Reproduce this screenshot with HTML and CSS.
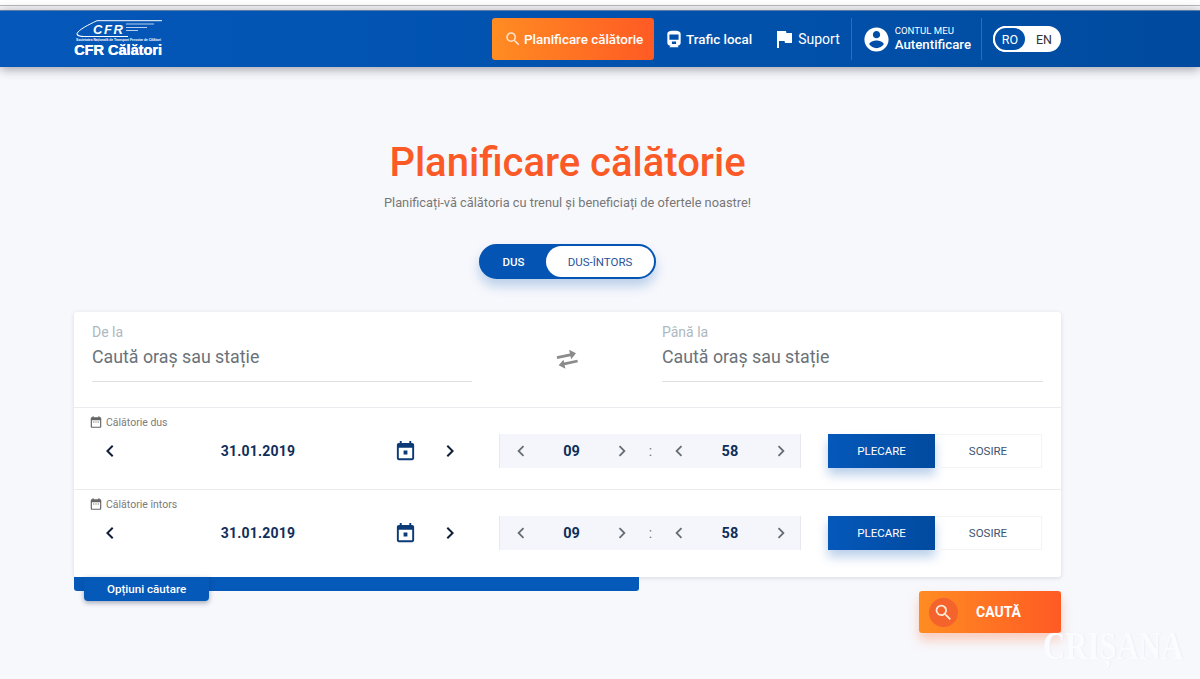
FILE: index.html
```html
<!DOCTYPE html>
<html lang="ro">
<head>
  <meta charset="UTF-8" />
  <meta name="viewport" content="width=device-width, initial-scale=1.0"/>
  <title>CFR Călători - Planificare călătorie</title>
  <link rel="stylesheet" href="styles.css">
</head>
<body>
  <svg class="sprite" aria-hidden="true">
    <symbol id="i-search" viewBox="0 0 24 24"><path d="M15.5 14h-.79l-.28-.27A6.47 6.47 0 0 0 16 9.5 6.5 6.5 0 1 0 9.5 16c1.61 0 3.09-.59 4.23-1.57l.27.28v.79l5 4.99L20.49 19l-4.99-5zm-6 0C7.01 14 5 11.99 5 9.5S7.01 5 9.5 5 14 7.01 14 9.5 11.99 14 9.5 14z"/></symbol>
    <symbol id="i-train" viewBox="0 0 24 24"><path fill-rule="evenodd" d="M12 2C8 2 4 2.5 4 6v10.500C4 18.430 5.570 20 7.500 20h.5l-1.500 1.500V22h11v-.5L16 20h.5c1.930 0 3.500-1.570 3.500-3.500V6c0-3.500-4-4-8-4zM6.500 6.500h11v6.500h-11zM9.500 15h5v3h-5z"/></symbol>
    <symbol id="i-flag" viewBox="0 0 24 24"><path d="M14.400 6L14 4H5v17h2v-7h5.600l.4 2h7V6z"/></symbol>
    <symbol id="i-user" viewBox="0 0 24 24"><path d="M12 2C6.480 2 2 6.480 2 12s4.480 10 10 10 10-4.480 10-10S17.520 2 12 2zm0 3c1.660 0 3 1.340 3 3s-1.340 3-3 3-3-1.340-3-3 1.340-3 3-3zm0 14.200c-2.500 0-4.710-1.280-6-3.220.03-1.990 4-3.080 6-3.080 1.990 0 5.970 1.090 6 3.080-1.290 1.940-3.500 3.220-6 3.220z"/></symbol>
    <symbol id="i-prev" viewBox="0 0 24 24"><path d="M15.410 7.410L14 6l-6 6 6 6 1.410-1.410L10.830 12z"/></symbol>
    <symbol id="i-next" viewBox="0 0 24 24"><path d="M8.590 16.590L10 18l6-6-6-6-1.410 1.410L13.170 12z"/></symbol>
    <symbol id="i-day" viewBox="0 0 24 24"><path d="M19 3h-1V1h-2v2H8V1H6v2H5c-1.110 0-2 .9-2 2v14c0 1.100.890 2 2 2h14c1.100 0 2-.9 2-2V5c0-1.100-.9-2-2-2zm0 16H5V8h14v11zM10 11h4v4h-4z"/></symbol>
    <symbol id="i-range" viewBox="0 0 24 24"><path d="M9 11H7v2h2v-2zm4 0h-2v2h2v-2zm4 0h-2v2h2v-2zm2-7h-1V2h-2v2H8V2H6v2H5c-1.110 0-2 .9-2 2v14c0 1.100.890 2 2 2h14c1.100 0 2-.9 2-2V6c0-1.100-.9-2-2-2zm0 16H5V9h14v11z"/></symbol>
    <symbol id="i-swap" viewBox="0 0 24 24"><path d="M3 8.500h12.500V5l5.500 4.500-5.500 4.500v-3H3zM21 15.500H8.500V13L3 17l5.500 4.500V18H21z"/></symbol>
  </svg>

  <div class="browser-strip"></div>

  <header class="topbar">
    <div class="wrap topbar-inner">
      <a class="logo" href="#">
        <svg class="logo-train" viewBox="0 0 86 17" aria-hidden="true">
          <path d="M1 13.500C3 9.500 12 5 21 .7H86" fill="none" stroke="#fff" stroke-width="1"/>
          <path d="M1 13.500C1 16 4 16.500 8 16.500H52" fill="none" stroke="#fff" stroke-width="1.200"/>
          <path d="M50 4H78M50 7.500H71M50 10.500H62" fill="none" stroke="#b9cdea" stroke-width="1.100"/>
        </svg>
        <span class="logo-cfr">CFR</span>
        <span class="logo-small">Societatea Națională de Transport Feroviar de Călători</span>
        <span class="logo-name">CFR Călători</span>
      </a>
      <nav class="nav">
        <a class="nav-item nav-item-active" href="#"><svg class="icon icon-nav-search"><use href="#i-search"/></svg>Planificare călătorie</a>
        <a class="nav-item nav-item-trafic" href="#"><svg class="icon icon-train"><use href="#i-train"/></svg>Trafic local</a>
        <a class="nav-item nav-item-suport" href="#"><svg class="icon icon-flag"><use href="#i-flag"/></svg>Suport</a>
        <a class="account" href="#">
          <svg class="icon icon-user"><use href="#i-user"/></svg>
          <span class="account-text">
            <small>CONTUL MEU</small>
            <b>Autentificare</b>
          </span>
        </a>
        <div class="lang">
          <span class="lang-option lang-active">RO</span>
          <span class="lang-option">EN</span>
        </div>
      </nav>
    </div>
  </header>

  <main class="wrap">
    <h1 class="title">Planificare călătorie</h1>
    <p class="subtitle">Planificați-vă călătoria cu trenul și beneficiați de ofertele noastre!</p>

    <div class="trip-type">
      <span class="trip-option trip-active">DUS</span>
      <span class="trip-option trip-return">DUS-ÎNTORS</span>
    </div>

    <section class="card">
      <div class="stations">
        <label class="field">
          <span class="field-label">De la</span>
          <span class="field-value">Caută oraș sau stație</span>
        </label>
        <svg class="icon icon-swap"><use href="#i-swap"/></svg>
        <label class="field">
          <span class="field-label">Până la</span>
          <span class="field-value">Caută oraș sau stație</span>
        </label>
      </div>

      <div class="trip-row">
        <div class="trip-label"><svg class="icon icon-range"><use href="#i-range"/></svg>Călătorie dus</div>
        <div class="trip-controls">
          <div class="date-picker">
            <svg class="icon icon-chevron"><use href="#i-prev"/></svg>
            <span class="date-value">31.01.2019</span>
            <svg class="icon icon-day"><use href="#i-day"/></svg>
            <svg class="icon icon-chevron"><use href="#i-next"/></svg>
          </div>
          <div class="time-picker">
            <div class="time-unit">
              <svg class="icon icon-chevron-soft"><use href="#i-prev"/></svg>
              <span class="time-value">09</span>
              <svg class="icon icon-chevron-soft"><use href="#i-next"/></svg>
            </div>
            <span class="time-colon">:</span>
            <div class="time-unit">
              <svg class="icon icon-chevron-soft"><use href="#i-prev"/></svg>
              <span class="time-value">58</span>
              <svg class="icon icon-chevron-soft"><use href="#i-next"/></svg>
            </div>
          </div>
          <div class="mode">
            <span class="mode-option mode-active">PLECARE</span>
            <span class="mode-option">SOSIRE</span>
          </div>
        </div>
      </div>

      <div class="trip-row trip-row-last">
        <div class="trip-label"><svg class="icon icon-range"><use href="#i-range"/></svg>Călătorie întors</div>
        <div class="trip-controls">
          <div class="date-picker">
            <svg class="icon icon-chevron"><use href="#i-prev"/></svg>
            <span class="date-value">31.01.2019</span>
            <svg class="icon icon-day"><use href="#i-day"/></svg>
            <svg class="icon icon-chevron"><use href="#i-next"/></svg>
          </div>
          <div class="time-picker">
            <div class="time-unit">
              <svg class="icon icon-chevron-soft"><use href="#i-prev"/></svg>
              <span class="time-value">09</span>
              <svg class="icon icon-chevron-soft"><use href="#i-next"/></svg>
            </div>
            <span class="time-colon">:</span>
            <div class="time-unit">
              <svg class="icon icon-chevron-soft"><use href="#i-prev"/></svg>
              <span class="time-value">58</span>
              <svg class="icon icon-chevron-soft"><use href="#i-next"/></svg>
            </div>
          </div>
          <div class="mode">
            <span class="mode-option mode-active">PLECARE</span>
            <span class="mode-option">SOSIRE</span>
          </div>
        </div>
      </div>
    </section>

    <div class="card-footer">
      <div class="options-bar">
        <a class="options-tab" href="#">Opțiuni căutare</a>
      </div>
      <button class="search-btn" type="button">
        <span class="search-circle"><svg class="icon icon-search"><use href="#i-search"/></svg></span>
        <span class="search-text">CAUTĂ</span>
      </button>
    </div>
  </main>

  <div class="watermark">CRIȘANA</div>
</body>
</html>
```

FILE: styles.css
```css
* {
  box-sizing: border-box;
}

html, body {
  height: 679px;
  overflow: hidden;
}

body {
  margin: 0;
  background: #f7f8fc;
  font-family: Roboto, "Liberation Sans", sans-serif;
  position: relative;
}

a {
  color: inherit;
  text-decoration: none;
}

.sprite {
  display: none;
}

.icon {
  display: block;
  flex: none;
  fill: currentColor;
}

.wrap {
  width: 987px;
  margin-left: 74px;
}

.browser-strip {
  height: 10px;
  background: #f6f6f8;
  border-top: 5px solid #fff;
  box-shadow: inset 0 1px 0 #b9b9b9;
}

/* header */
.topbar {
  height: 57px;
  background: linear-gradient(90deg, #0557b9 0%, #0152ae 50%, #004b9f 100%);
  border-top: 1px solid #5b7ea8;
  box-shadow: 0 2px 10px rgba(40, 40, 60, 0.45);
  color: #fff;
  position: relative;
}

.topbar-inner {
  display: flex;
  justify-content: space-between;
  height: 100%;
}

.logo {
  display: block;
  position: relative;
  width: 88px;
  height: 47px;
  margin-top: 9px;
  padding-left: 2px;
}

.logo-train {
  display: block;
  width: 86px;
  height: 17px;
}

.logo-cfr {
  position: absolute;
  left: 19px;
  top: 2px;
  font: italic 700 13px/15px "Liberation Sans", sans-serif;
  letter-spacing: 1.600px;
}

.logo-small {
  display: block;
  font: 700 3.300px/5px "Liberation Sans", sans-serif;
  white-space: nowrap;
  margin-top: 1px;
}

.logo-name {
  display: block;
  font: 700 14.500px/15px "Liberation Sans", sans-serif;
  white-space: nowrap;
  margin-left: -2px;
  text-shadow: 0.4px 0 0 #fff;
}

.nav {
  display: flex;
  align-items: center;
  font-size: 13.400px;
  font-weight: 500;
}

.nav-item {
  display: flex;
  align-items: center;
  height: 42px;
}

.nav-item-active {
  width: 162px;
  padding-left: 12px;
  gap: 2px;
  margin-right: 10px;
  border-radius: 3px;
  background: linear-gradient(90deg, #ff8c22, #ff5a24);
  white-space: nowrap;
}

.nav-item-trafic {
  gap: 2px;
  margin-right: 20px;
}

.nav-item-suport {
  gap: 2px;
  font-size: 14px;
  font-weight: 400;
  padding-right: 11px;
}

.icon-nav-search {
  width: 18px;
  height: 18px;
  color: #ffe6d2;
}

.icon-train {
  width: 20px;
  height: 20px;
}

.icon-flag {
  width: 24px;
  height: 24px;
}

.account {
  display: flex;
  align-items: center;
  height: 42px;
  padding: 0 10px 0 12px;
  gap: 5px;
  border-left: 1px solid #2d6db5;
  border-right: 1px solid #2d6db5;
}

.icon-user {
  width: 29px;
  height: 29px;
  margin: 0 -1px 0 -2px;
}

.account-text {
  display: flex;
  flex-direction: column;
}

.account-text small {
  font-size: 9.600px;
  font-weight: 400;
  line-height: 12px;
}

.account-text b {
  font-size: 13.250px;
  font-weight: 500;
  line-height: 16px;
}

.lang {
  display: flex;
  width: 68px;
  height: 26px;
  margin-left: 11px;
  border-radius: 13px;
  background: #fff;
  font-size: 12.500px;
  font-weight: 400;
  color: #333;
}

.lang-option {
  width: 34px;
  display: flex;
  align-items: center;
  justify-content: center;
}

.lang-active {
  color: #fff;
  background: #004fa8;
  border: 2px solid #fff;
  border-radius: 13px;
}

/* title */
.title {
  margin: 72px 0 0;
  text-align: center;
  font-size: 40px;
  font-weight: 500;
  line-height: 48px;
  color: #fb5a27;
}

.subtitle {
  margin: 7px 0 0;
  text-align: center;
  font-size: 12.800px;
  line-height: 18px;
  color: #777;
}

.trip-type {
  display: flex;
  width: 177px;
  height: 35px;
  margin: 32px auto 0;
  background: #0454b3;
  border: 2px solid #0454b3;
  border-radius: 18px;
  box-shadow: 0 7px 12px rgba(30, 100, 190, 0.28);
  font-size: 11.500px;
  font-weight: 500;
}

.trip-option {
  display: flex;
  align-items: center;
  justify-content: center;
}

.trip-active {
  width: 65px;
  color: #fff;
}

.trip-return {
  flex: 1;
  color: #28539a;
  background: #fff;
  border-radius: 16px;
  font-weight: 400;
}

/* form card */
.card {
  margin-top: 33px;
  background: #fff;
  border-radius: 3px;
  box-shadow: 0 1px 4px rgba(60, 60, 90, 0.16);
}

.stations {
  display: grid;
  grid-template-columns: 380px 1fr 381px;
  height: 95px;
  padding: 12px 18px 0;
}

.field {
  display: flex;
  flex-direction: column;
  height: 58px;
  border-bottom: 1px solid #dfe0e3;
}

.field-label {
  font-size: 14px;
  line-height: 16px;
  color: #aeb8c0;
}

.field-value {
  margin-top: 5px;
  font-size: 17.800px;
  line-height: 24px;
  color: #6a7279;
}

.icon-swap {
  width: 30px;
  height: 26px;
  margin: 21px auto 0;
  color: #8b8b8b;
  transform: rotate(-12deg);
}

.trip-row {
  height: 82px;
  border-top: 1px solid #ececf0;
}

.trip-row-last {
  height: 88px;
}

.trip-label {
  display: flex;
  align-items: center;
  gap: 3px;
  height: 14px;
  margin-top: 7px;
  padding-left: 15px;
  font-size: 10.500px;
  color: #7b7b7b;
}

.icon-range {
  width: 14px;
  height: 14px;
  color: #666;
}

.trip-controls {
  display: flex;
  margin-top: 5px;
}

.date-picker {
  display: flex;
  align-items: center;
  width: 425px;
  height: 34px;
  padding: 0 37px 0 24px;
  color: #101f3a;
}

.icon-chevron {
  width: 24px;
  height: 24px;
}

.date-value {
  flex: 1;
  text-align: center;
  font-size: 14px;
  font-weight: 700;
  letter-spacing: 0.200px;
  color: #0f2e5a;
}

.icon-day {
  width: 23px;
  height: 23px;
  margin-right: 21px;
  color: #0b3a76;
}

.time-picker {
  display: flex;
  align-items: center;
  width: 302px;
  height: 34px;
  padding: 0 8px 0 10px;
  background: #f5f6fb;
  border-left: 1px solid #e7e8ee;
  border-right: 1px solid #e7e8ee;
}

.time-unit {
  display: flex;
  align-items: center;
  width: 125px;
}

.time-unit:first-child {
  width: 124px;
}

.icon-chevron-soft {
  width: 22px;
  height: 24px;
  color: #666d75;
}

.time-value {
  flex: 1;
  text-align: center;
  font-size: 14.500px;
  font-weight: 700;
  color: #0f2e5a;
}

.time-colon {
  width: 35px;
  text-align: center;
  font-size: 14px;
  color: #777;
}

.mode {
  display: flex;
  margin-left: 27px;
  height: 34px;
  font-size: 11.500px;
}

.mode-option {
  display: flex;
  align-items: center;
  justify-content: center;
  width: 107px;
  color: #3d5470;
  border: 1px solid #f4f4f7;
  border-left: 0;
}

.mode-active {
  color: #fff;
  background: linear-gradient(90deg, #0558ba, #014a9f);
  border: 0;
  box-shadow: 0 7px 10px rgba(30, 100, 190, 0.3);
}

/* under the card */
.card-footer {
  display: flex;
  justify-content: space-between;
  align-items: flex-start;
}

.options-bar {
  position: relative;
  width: 565px;
  height: 14px;
  background: #0559b9;
  border-radius: 0 0 3px 3px;
}

.options-tab {
  position: absolute;
  left: 10px;
  top: 0;
  width: 125px;
  height: 24px;
  padding: 5px 0 0 23px;
  background: #0559b9;
  border-radius: 0 0 4px 4px;
  box-shadow: 0 2px 5px rgba(40, 50, 80, 0.4);
  color: #fff;
  font-size: 11.600px;
  font-weight: 500;
  line-height: 14px;
}

.search-btn {
  display: flex;
  align-items: center;
  width: 142px;
  height: 42px;
  margin-top: 14px;
  padding: 0 0 0 10px;
  border: 0;
  border-radius: 3px;
  background: linear-gradient(90deg, #ff8c22, #ff5a24);
  box-shadow: 0 7px 12px rgba(255, 100, 40, 0.3);
  color: #fff;
  font-family: inherit;
}

.search-circle {
  display: flex;
  align-items: center;
  justify-content: center;
  width: 29px;
  height: 29px;
  border-radius: 50%;
  background: #f4632c;
}

.icon-search {
  width: 21px;
  height: 21px;
  color: #ffe9d8;
}

.search-text {
  margin-left: 18px;
  font-size: 14px;
  font-weight: 700;
}

/* pasted over the screenshot */
.watermark {
  position: absolute;
  left: 1043px;
  top: 625px;
  font-family: "Liberation Serif", serif;
  font-size: 40px;
  font-weight: 700;
  line-height: 42px;
  color: #fbfcfe;
  text-shadow: 1px 0 1px #e4e9f4;
  transform: scaleX(0.77);
  transform-origin: left;
}
```
